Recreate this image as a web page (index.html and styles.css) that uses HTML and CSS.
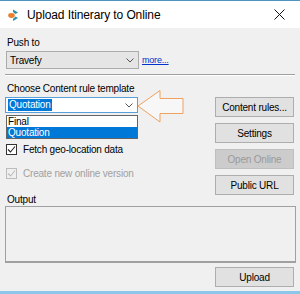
FILE: index.html
```html
<!DOCTYPE html>
<html lang="en">
<head>
    <meta charset="UTF-8">
    <title>Upload Itinerary to Online</title>
    <link rel="stylesheet" href="styles.css">
</head>
<body>
    <div class="window">
        <div class="titlebar">
            <svg class="app-icon" width="12" height="12" viewBox="0 0 12 12">
                <ellipse cx="3.5" cy="6.5" rx="3.3" ry="2.4" fill="#ee7d2f"/>
                <polygon points="5,0.5 10,3.5 7.5,5 5,3" fill="#2a8fa8"/>
                <polygon points="7.5,7.5 10,9 5,12 5,10" fill="#2a8fa8"/>
            </svg>
            <span class="title">Upload Itinerary to Online</span>
            <svg class="close" width="11" height="11" viewBox="0 0 11 11">
                <path d="M0.5 0.5 L10.5 10.5 M10.5 0.5 L0.5 10.5" stroke="#111" stroke-width="1"/>
            </svg>
        </div>

        <div class="content">
            <div class="label">Push to</div>
            <div class="push-row">
                <div class="combo combo-gray">
                    <span>Travefy</span>
                    <svg class="chev" width="8" height="5" viewBox="0 0 8 5"><polyline points="0.5,0.5 4,4 7.5,0.5" fill="none" stroke="#555"/></svg>
                </div>
                <a href="#" class="more">more...</a>
            </div>

            <div class="sep"></div>

            <div class="main">
                <div class="left">
                    <div class="label">Choose Content rule template</div>
                    <div class="combo combo-white">
                        <span class="selected">Quotation</span>
                        <svg class="chev" width="8" height="5" viewBox="0 0 8 5"><polyline points="0.5,0.5 4,4 7.5,0.5" fill="none" stroke="#555"/></svg>
                    </div>
                    <div class="check check-first">
                        <span class="box"><svg width="9" height="9" viewBox="0 0 9 9"><polyline points="1,4.5 3.5,7 8,1.5" fill="none" stroke="#222" stroke-width="1.1"/></svg></span>
                        <span>Fetch geo-location data</span>
                    </div>
                    <div class="check disabled">
                        <span class="box"><svg width="9" height="9" viewBox="0 0 9 9"><polyline points="1,4.5 3.5,7 8,1.5" fill="none" stroke="#bdbdbd" stroke-width="1.1"/></svg></span>
                        <span>Create new online version</span>
                    </div>
                    <div class="label output-label">Output</div>
                </div>
                <div class="buttons">
                    <button class="btn">Content rules...</button>
                    <button class="btn">Settings</button>
                    <button class="btn" disabled>Open Online</button>
                    <button class="btn">Public URL</button>
                </div>
            </div>

            <div class="output"></div>

            <div class="footer-row">
                <button class="btn">Upload</button>
            </div>

            <ul class="dropdown">
                <li>Final</li>
                <li class="active">Quotation</li>
            </ul>

            <svg class="pointer" width="48" height="35" viewBox="0 0 48 35">
                <polygon points="1,17 23,1.5 23,9.5 46,9.5 46,24.5 23,24.5 23,33" fill="#f7f7f7" stroke="#f0a15e" stroke-width="1"/>
            </svg>
        </div>
    </div>
</body>
</html>
```

FILE: styles.css
```css
* {
    box-sizing: border-box;
}
body {
    margin: 0;
    font-family: 'Liberation Sans', Arial, sans-serif;
    font-size: 10px;
    letter-spacing: -0.2px;
    color: #000;
    background: #f0f0f0;
}
.window {
    width: 300px;
    height: 294px;
    display: flex;
    flex-direction: column;
    background: #f0f0f0;
    border-top: 1px solid #4f94bd;
    border-bottom: 3px solid #8cc6ea;
}
.titlebar {
    height: 27px;
    background: #ffffff;
    display: flex;
    align-items: center;
    padding: 0 15px 0 8px;
}
.app-icon {
    margin-right: 7px;
}
.title {
    font-size: 12px;
    letter-spacing: -0.1px;
    flex-grow: 1;
}
.content {
    position: relative;
    flex-grow: 1;
    padding: 9px 4px 0 5px;
}
.label {
    line-height: 12px;
    margin-left: 2px;
}
.push-row {
    display: flex;
    align-items: center;
    margin-top: 2px;
}
.combo {
    display: flex;
    align-items: center;
    justify-content: space-between;
    width: 133px;
    margin-left: 1px;
    padding: 0 4px 0 3px;
}
.combo-gray {
    height: 18px;
    background: #e5e5e5;
    border: 1px solid #acacac;
}
.combo-white {
    height: 16px;
    margin-top: 2px;
    margin-left: 0;
    width: 133px;
    background: #ffffff;
    border: 1px solid #5a9fd8;
    padding-left: 2px;
}
.more {
    margin-left: 3px;
    font-size: 9px;
    color: #0033cc;
}
.selected {
    background: #0078d7;
    color: #fff;
    line-height: 12px;
    padding: 0 1px;
}
.sep {
    margin-top: 5px;
    height: 2px;
    border-top: 1px solid #a0a0a0;
    border-bottom: 1px solid #ffffff;
    width: 290px;
}
.main {
    display: grid;
    grid-template-columns: 1fr 79px;
    margin-top: 7px;
    padding-right: 2px;
}
.check {
    display: flex;
    align-items: center;
    height: 12px;
    margin-left: 1px;
}
.check-first {
    margin-top: 30px;
}
.check + .check {
    margin-top: 12px;
}
.box {
    width: 11px;
    height: 11px;
    border: 1px solid #333;
    background: #fff;
    display: flex;
    align-items: center;
    justify-content: center;
    margin-right: 6px;
}
.check.disabled {
    color: #a0a0a0;
}
.check.disabled .box {
    border-color: #bcbcbc;
    background: #f0f0f0;
}
.output-label {
    margin-top: 15px;
}
.buttons {
    display: flex;
    flex-direction: column;
    gap: 6px;
    padding-top: 14px;
}
.btn {
    height: 20px;
    width: 79px;
    font-family: inherit;
    font-size: 10px;
    letter-spacing: -0.2px;
    color: #000;
    background: #e1e1e1;
    border: 1px solid #adadad;
    padding: 0;
}
.btn:disabled {
    background: #cccccc;
    border-color: #bfbfbf;
    color: #9a9a9a;
}
.output {
    width: 291px;
    height: 57px;
    border: 1px solid #a0a0a0;
    border-bottom-width: 2px;
}
.footer-row {
    display: flex;
    justify-content: flex-end;
    margin-top: 4px;
    padding-right: 2px;
}
.dropdown {
    position: absolute;
    left: 6px;
    top: 87px;
    width: 132px;
    margin: 0;
    padding: 0;
    list-style: none;
    background: #fff;
    border: 1px solid #646464;
}
.dropdown li {
    height: 11px;
    line-height: 11px;
    padding-left: 1px;
}
.dropdown li.active {
    background: #0078d7;
    color: #fff;
}
.pointer {
    position: absolute;
    left: 137px;
    top: 61px;
}
```
